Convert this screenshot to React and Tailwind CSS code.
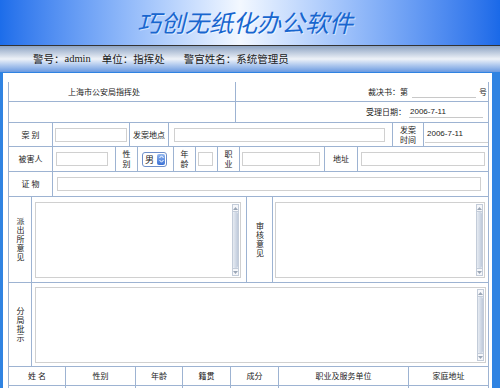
import React from "react";

const line = "border-[#9db3d2]";
const cjk = { fontFamily: '"Noto Sans CJK SC", "Noto Sans", sans-serif' };

// small text box used throughout the form
const Box = ({ className = "", children }) => (
  <div
    className={`flex h-[14px] items-center border border-[#d0d0d0] bg-white text-[8px] ${className}`}
  >
    {children}
  </div>
);

const Label = ({ className = "", children }) => (
  <div
    className={`flex shrink-0 items-center justify-center border-r ${line} text-center text-[8px] leading-[10px] text-[#222] ${className}`}
  >
    {children}
  </div>
);

const Scroll = () => (
  <div className="m-[1px] flex w-[7px] flex-col border border-[#c3ccd9] bg-[#eef2f7]">
    <div className="flex h-[7px] items-center justify-center border-b border-[#c3ccd9] bg-[#f6f7fa]">
      <svg width="5" height="3" viewBox="0 0 5 3">
        <path d="M0 3 L2.5 0 L5 3 Z" fill="#9aa6b6" />
      </svg>
    </div>
    <div className="flex-1 rounded-[2px] bg-linear-to-r from-[#e6ebf2] via-[#d3dbe7] to-[#bfcadb]" />
    <div className="flex h-[7px] items-center justify-center border-t border-[#c3ccd9] bg-[#f6f7fa]">
      <svg width="5" height="3" viewBox="0 0 5 3">
        <path d="M0 0 L2.5 3 L5 0 Z" fill="#9aa6b6" />
      </svg>
    </div>
  </div>
);

const TextArea = ({ className = "" }) => (
  <div className={`flex h-[76px] border border-[#d0d0d0] bg-white ${className}`}>
    <div className="flex-1" />
    <Scroll />
  </div>
);

// stacked label, one character per line
const Vertical = ({ text }) => (
  <span className="tracking-[1px] [writing-mode:vertical-rl] leading-[10px]">{text}</span>
);

export default function App() {
  return (
    <div className="h-[388px] w-[500px] overflow-hidden bg-[#2f83e2]" style={cjk}>
      {/* title banner */}
      <div className="flex h-[45px] items-center justify-center bg-linear-to-r from-[#1c6dea] via-[#f3f8ff] via-48% to-[#1a69e8] pb-[2px] pr-[10px]">
        <span className="text-[24px] italic leading-none text-[#1866cf] [text-shadow:1px_1px_0_rgba(255,255,255,0.5)]">
          巧创无纸化办公软件
        </span>
      </div>
      <div className="h-[1px] bg-[#333]" />

      {/* user bar */}
      <div className="flex h-[26px] items-center bg-linear-to-b from-[#8ea4c3] via-[#eef2f8] to-[#6b9ae0] pl-[33px] text-[10.5px] text-[#1a1a1a]">
        <span>警号：</span>
        <span style={{ fontFamily: '"Liberation Serif", serif' }}>admin</span>
        <span className="ml-[11px]">单位：指挥处</span>
        <span className="ml-[19px]">警官姓名：系统管理员</span>
      </div>

      {/* form panel */}
      <div className="ml-[3px] mt-[1px] h-[320px] w-[489px] bg-white pt-[9px]">
        <div className={`ml-[5px] w-[481px] border-l border-r ${line}`}>
          {/* row 1 */}
          <div className={`flex h-[20px] border-b ${line}`}>
            <div className={`flex w-[227px] items-center border-r ${line} pl-[59px] text-[8px] text-[#222]`}>
              上海市公安局指挥处
            </div>
            <div className="flex flex-1 items-center justify-end pr-[1px] text-[8px] text-[#222]">
              <span>裁决书：第</span>
              <div className="ml-[4px] h-[12px] w-[64px] border-b border-[#c8c8c8]" />
              <span className="ml-[3px]">号</span>
            </div>
          </div>

          {/* row 2 */}
          <div className={`flex h-[21px] border-b ${line}`}>
            <div className={`w-[227px] border-r ${line}`} />
            <div className="flex flex-1 items-center justify-end pr-[5px] text-[8px] text-[#222]">
              <span>受理日期：</span>
              <div
                className="ml-[3px] flex h-[12px] w-[74px] items-center border-b border-[#c8c8c8] pl-[1px]"
                style={{ fontFamily: '"Liberation Sans", sans-serif' }}
              >
                2006-7-11
              </div>
            </div>
          </div>

          {/* row 3 */}
          <div className={`flex h-[24px] border-b ${line}`}>
            <Label className="w-[44px]">案 别</Label>
            <div className={`flex w-[77px] items-center border-r ${line}`}>
              <Box className="ml-[2px] w-[72px]" />
            </div>
            <Label className="w-[39px]">发案地点</Label>
            <div className={`flex w-[224px] items-center border-r ${line}`}>
              <Box className="ml-[5px] w-[211px]" />
            </div>
            <Label className="w-[31px]">
              发案
              <br />
              时间
            </Label>
            <div className="flex flex-1 items-center pl-[1px]">
              <div
                className="flex h-[17px] flex-1 items-center border-b border-[#d0d0d0] pl-[2px] text-[8px] text-[#222]"
                style={{ fontFamily: '"Liberation Sans", sans-serif' }}
              >
                2006-7-11
              </div>
            </div>
          </div>

          {/* row 4 */}
          <div className={`flex h-[25px] border-b ${line}`}>
            <Label className="w-[44px]">被害人</Label>
            <div className={`flex w-[63px] items-center border-r ${line}`}>
              <Box className="ml-[3px] w-[52px]" />
            </div>
            <Label className="w-[22px]">
              性
              <br />
              别
            </Label>
            <div className={`flex w-[36px] items-center border-r ${line}`}>
              <div className="ml-[4px] flex h-[15px] w-[25px] items-center rounded-[3px] border border-[#6f8fc9] bg-white">
                <span className="pl-[2px] text-[9px] leading-none text-[#222]">男</span>
                <span className="ml-auto mr-[1px] flex h-[11px] w-[8px] items-center justify-center rounded-[2px] bg-linear-to-b from-[#93b7ef] to-[#3c71d5]">
                  <svg width="5" height="8" viewBox="0 0 5 8">
                    <path d="M0.5 3 L2.5 0.8 L4.5 3 M0.5 5 L2.5 7.2 L4.5 5" stroke="#fff" strokeWidth="1" fill="none" />
                  </svg>
                </span>
              </div>
            </div>
            <Label className="w-[22px]">
              年
              <br />
              龄
            </Label>
            <div className={`flex w-[22px] items-center border-r ${line}`}>
              <Box className="ml-[2px] w-[15px]" />
            </div>
            <Label className="w-[22px]">
              职
              <br />
              业
            </Label>
            <div className={`flex w-[85px] items-center border-r ${line}`}>
              <Box className="ml-[2px] w-[78px]" />
            </div>
            <Label className="w-[33px]">地址</Label>
            <div className="flex flex-1 items-center">
              <Box className="ml-[3px] w-[124px]" />
            </div>
          </div>

          {/* row 5 */}
          <div className={`flex h-[25px] border-b ${line}`}>
            <Label className="w-[44px]">证 物</Label>
            <div className="flex flex-1 items-center">
              <Box className="ml-[4px] w-[424px]" />
            </div>
          </div>

          {/* row 6 */}
          <div className={`flex h-[86px] border-b ${line}`}>
            <Label className="w-[23px]">
              <Vertical text="派出所意见" />
            </Label>
            <div className={`w-[215px] border-r ${line} pt-[5px]`}>
              <TextArea className="ml-[3px] w-[206px]" />
            </div>
            <Label className="w-[26px]">
              <Vertical text="审核意见" />
            </Label>
            <div className="flex-1 pt-[5px]">
              <TextArea className="ml-[2px] w-[210px]" />
            </div>
          </div>

          {/* row 7 */}
          <div className={`flex h-[84px] border-b ${line}`}>
            <Label className="w-[23px]">
              <Vertical text="分局批示" />
            </Label>
            <div className="flex-1 pt-[4px]">
              <TextArea className="ml-[3px] w-[451px]" />
            </div>
          </div>

          {/* row 8 */}
          <div className={`flex h-[19px] border-b ${line}`}>
            <Label className="w-[57px]">姓 名</Label>
            <Label className="w-[70px]">性别</Label>
            <Label className="w-[47px]">年龄</Label>
            <Label className="w-[48px]">籍贯</Label>
            <Label className="w-[48px]">成分</Label>
            <Label className="w-[130px]">职业及服务单位</Label>
            <div className="flex flex-1 items-center justify-center text-[8px] text-[#222]">家庭地址</div>
          </div>

          {/* row 9 */}
          <div className="flex h-[20px]">
            <div className={`w-[57px] border-r ${line}`} />
            <div className={`w-[70px] border-r ${line}`} />
            <div className={`w-[47px] border-r ${line}`} />
            <div className={`w-[48px] border-r ${line}`} />
            <div className={`w-[48px] border-r ${line}`} />
            <div className={`w-[130px] border-r ${line}`} />
            <div className="flex-1" />
          </div>
        </div>
      </div>
    </div>
  );
}
